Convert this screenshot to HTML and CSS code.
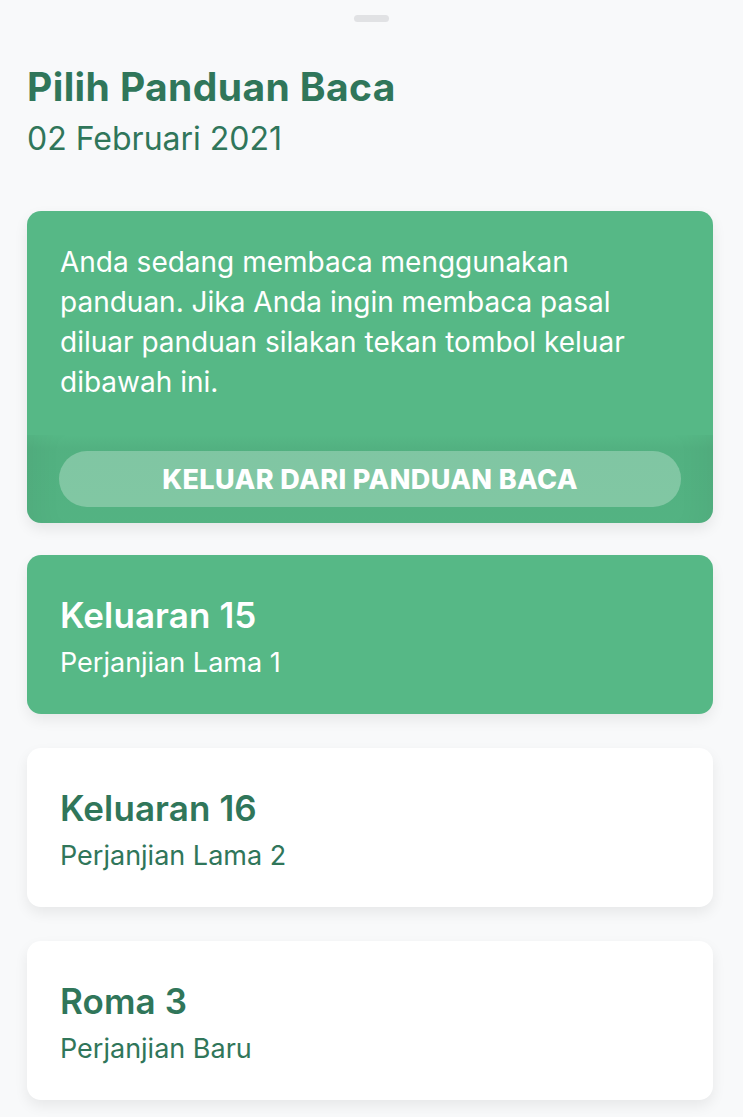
FILE: index.html
```html
<!DOCTYPE html>
<html lang="id">
<head>
<meta charset="utf-8">
<title>Pilih Panduan Baca</title>
<link rel="stylesheet" href="styles.css">
</head>
<body>
<div class="sheet">
  <div class="handle"></div>
  <header class="header">
    <h1 class="title">Pilih Panduan Baca</h1>
    <p class="date">02 Februari 2021</p>
  </header>
  <section class="notice">
    <p class="notice-text">Anda sedang membaca menggunakan panduan. Jika Anda ingin membaca pasal diluar panduan silakan tekan tombol keluar dibawah ini.</p>
    <div class="notice-footer">
      <button class="exit-btn">KELUAR DARI PANDUAN BACA</button>
    </div>
  </section>
  <div class="list">
    <div class="item item-active">
      <div class="item-title">Keluaran 15</div>
      <div class="item-sub">Perjanjian Lama 1</div>
    </div>
    <div class="item">
      <div class="item-title">Keluaran 16</div>
      <div class="item-sub">Perjanjian Lama 2</div>
    </div>
    <div class="item">
      <div class="item-title">Roma 3</div>
      <div class="item-sub">Perjanjian Baru</div>
    </div>
  </div>
</div>
</body>
</html>
```
FILE: styles.css
```css
* { box-sizing: border-box; }
html, body {
  margin: 0;
  padding: 0;
  background: #f8f9fa;
  font-family: Inter, "Noto Sans", sans-serif;
}
.sheet {
  display: flex;
  flex-direction: column;
  padding: 15px 30px 0 27px;
}
.handle {
  align-self: center;
  width: 35px;
  height: 7px;
  border-radius: 4px;
  background: #e1e2e4;
  margin-left: 3px;
}
.header {
  margin-top: 43px;
}
.title {
  margin: 0;
  font-size: 39px;
  line-height: 44px;
  font-weight: 700;
  color: #30765a;
  letter-spacing: 0.4px;
}
.date {
  margin: 10px 0 0;
  font-size: 32px;
  line-height: 40px;
  font-weight: 400;
  color: #30765a;
}
.notice {
  margin-top: 52px;
  background: #56b886;
  border-radius: 14px;
  overflow: hidden;
  box-shadow: 0 6px 14px rgba(0, 0, 0, 0.08);
}
.notice-text {
  margin: 0;
  padding: 31px 60px 33px 33px;
  font-size: 28px;
  line-height: 40px;
  color: #ffffff;
}
.notice-footer {
  padding: 16px 32px;
  background: linear-gradient(to bottom, rgba(30, 80, 60, 0) 0, rgba(30, 80, 60, 0.07) 14px, rgba(30, 80, 60, 0.05) 100%);
  box-shadow: inset 30px 0 30px -20px rgba(0, 0, 0, 0.04), inset -30px 0 30px -20px rgba(0, 0, 0, 0.04);
}
.exit-btn {
  display: block;
  width: 100%;
  height: 56px;
  border: 0;
  border-radius: 28px;
  background: rgba(255, 255, 255, 0.27);
  color: #ffffff;
  font-family: Inter, "Noto Sans", sans-serif;
  font-size: 27px;
  font-weight: 800;
  letter-spacing: 0.4px;
  padding: 0;
}
.list {
  display: flex;
  flex-direction: column;
  gap: 34px;
  margin-top: 32px;
  padding-bottom: 18px;
}
.item {
  height: 159px;
  padding: 36px 33px 0;
  background: #ffffff;
  border-radius: 14px;
  box-shadow: 0 6px 14px rgba(0, 0, 0, 0.07);
  color: #30765a;
}
.item-active {
  background: #56b886;
  color: #ffffff;
}
.item-title {
  font-size: 35px;
  line-height: 48px;
  font-weight: 600;
  letter-spacing: 0.1px;
}
.item-sub {
  margin-top: 4px;
  font-size: 27px;
  line-height: 40px;
  font-weight: 400;
}
```
